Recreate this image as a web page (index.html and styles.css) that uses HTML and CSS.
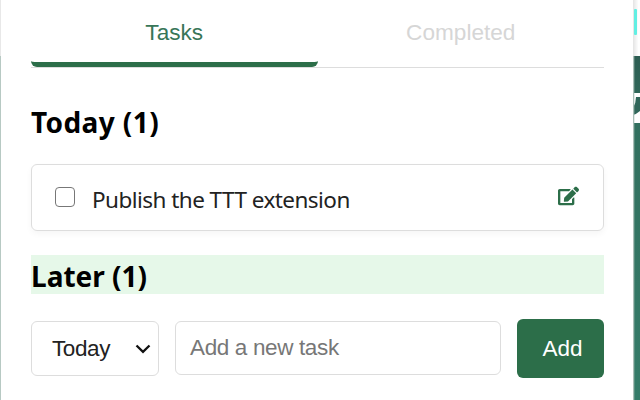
FILE: index.html
```html
<!DOCTYPE html>
<html lang="en">
<head>
<meta charset="utf-8">
<title>Tasks</title>
<link rel="stylesheet" href="styles.css">
</head>
<body>
<div class="left-edge"></div>
<main class="popup">
  <nav class="tabs">
    <div class="tab active"><span>Tasks</span></div>
    <div class="tab"><span>Completed</span></div>
  </nav>
  <h2 class="heading"><span class="today">Today (1)</span></h2>
  <section class="card">
    <span class="checkbox"></span>
    <span class="task">Publish the TTT extension</span>
    <svg class="edit" viewBox="0 0 576 512"><path fill="currentColor" d="M402.600 83.200l90.200 90.200c3.800 3.800 3.800 10 0 13.800L274.400 405.600l-92.800 10.300c-12.400 1.400-22.900-9.100-21.500-21.500l10.300-92.800L388.800 83.200c3.800-3.800 10-3.800 13.800 0zm162-22.900l-48.800-48.800c-15.200-15.200-39.900-15.200-55.200 0l-35.400 35.400c-3.800 3.800-3.800 10 0 13.800l90.200 90.200c3.800 3.800 10 3.800 13.800 0l35.400-35.400c15.200-15.300 15.200-40 0-55.200zM384 346.200V448H64V128h229.800c3.200 0 6.200-1.300 8.500-3.500l40-40c7.600-7.600 2.200-20.500-8.500-20.500H48C21.500 64 0 85.500 0 112v352c0 26.500 21.500 48 48 48h352c26.500 0 48-21.500 48-48V306.200c0-10.700-12.900-16-20.500-8.500l-40 40c-2.200 2.300-3.500 5.300-3.500 8.500z"/></svg>
  </section>
  <h2 class="heading later"><span>Later (1)</span></h2>
  <div class="form">
    <div class="select"><span>Today</span><svg viewBox="0 0 16 10"><path d="M1.500 1.500 8 7.800l6.500-6.300" fill="none" stroke="#111" stroke-width="2.300"/></svg></div>
    <div class="input">Add a new task</div>
    <div class="add"><span>Add</span></div>
  </div>
</main>
<aside class="backdrop">
  <svg width="7" height="400" viewBox="0 0 7 400">
    <defs>
      <linearGradient id="green" x1="0" y1="0" x2="0" y2="1"><stop offset="0" stop-color="#2c5d52"/><stop offset=".2" stop-color="#32705f"/><stop offset="1" stop-color="#357c69"/></linearGradient>
      <linearGradient id="shade"><stop offset="0" stop-color="#000" stop-opacity=".11"/><stop offset="1" stop-color="#000" stop-opacity=".01"/></linearGradient>
    </defs>
    <rect width="7" height="400" fill="#fff"/>
    <rect y="56" width="7" height="344" fill="url(#green)"/>
    <rect y="93" width="7" height="30" fill="#fff"/>
    <path d="M3 97H7V111Q3.500 114 0 115V108Q3 103 3 97Z" fill="#30675a"/>
    <rect width="5" height="56" fill="url(#shade)"/>
    <rect x="1" y="9" width="3" height="26" rx="1" fill="#62efe3"/>
    <rect y="56" width="1.300" height="344" fill="#a9beb7"/>
  </svg>
</aside>
</body>
</html>
```
FILE: styles.css
```css
* { box-sizing: border-box; }
body {
  margin: 0;
  width: 640px;
  height: 400px;
  overflow: hidden;
  display: flex;
  background: #fff;
  font-family: "Liberation Sans", sans-serif;
}
.left-edge {
  width: 1px;
  background: linear-gradient(#e8e8e8 56px, #b7c9c3 56px);
}
.popup { width: 632px; padding: 0 29px 0 30px; }
.backdrop { width: 7px; }
.backdrop svg { display: block; }
.tabs { display: flex; height: 68px; border-bottom: 1px solid #ddd; }
.tab {
  flex: 1;
  height: 67px;
  padding-top: 19px;
  text-align: center;
  font-size: 22.600px;
  line-height: 28px;
  color: #d6d6d6;
}
.tab.active {
  color: #387658;
  border-bottom: 5px solid #2c6e49;
  border-radius: 0 0 6px 6px;
}
.heading {
  margin: 33px 0 0;
  height: 39px;
  font: bold 28px/42px "Noto Sans", sans-serif;
  color: #000;
  white-space: nowrap;
}
.today { letter-spacing: .4px; }
.heading.later { margin-top: 24px; background: #e6f8e9; }
.card {
  display: flex;
  align-items: center;
  margin-top: 24px;
  height: 67px;
  padding: 0 24px 0 23px;
  border: 1px solid #ddd;
  border-radius: 6px;
  box-shadow: 0 3px 6px rgba(0, 0, 0, .04);
}
.checkbox {
  width: 20px;
  height: 20px;
  margin-bottom: 2px;
  border: 1.500px solid #777;
  border-radius: 4px;
}
.task {
  flex: 1;
  margin: 4px 0 0 17px;
  font: 22.500px/30px "Noto Sans", sans-serif;
  letter-spacing: -.54px;
  color: #222;
  white-space: nowrap;
}
.edit { width: 21px; height: 20px; margin-bottom: 3px; color: #2c6e49; }
.form { display: flex; align-items: flex-start; margin-top: 25px; height: 59px; }
.select, .input { border: 1px solid #ddd; border-radius: 6px; margin-top: 2px; font-size: 22.500px; }
.select {
  display: flex;
  justify-content: space-between;
  width: 128px;
  height: 55px;
  padding: 0 7px 0 20px;
  line-height: 53px;
  letter-spacing: -.4px;
  color: #222;
}
.select svg { width: 16px; height: 10px; margin-top: 22px; }
.input {
  width: 326px;
  height: 54px;
  margin-left: 16px;
  padding-left: 14px;
  line-height: 52px;
  letter-spacing: -.36px;
  color: #777;
}
.add {
  width: 87px;
  height: 59px;
  margin-left: 16px;
  padding-left: 4px;
  border-radius: 6px;
  background: #2c6e49;
  color: #fff;
  font-size: 22.500px;
  line-height: 59px;
  text-align: center;
}
```
